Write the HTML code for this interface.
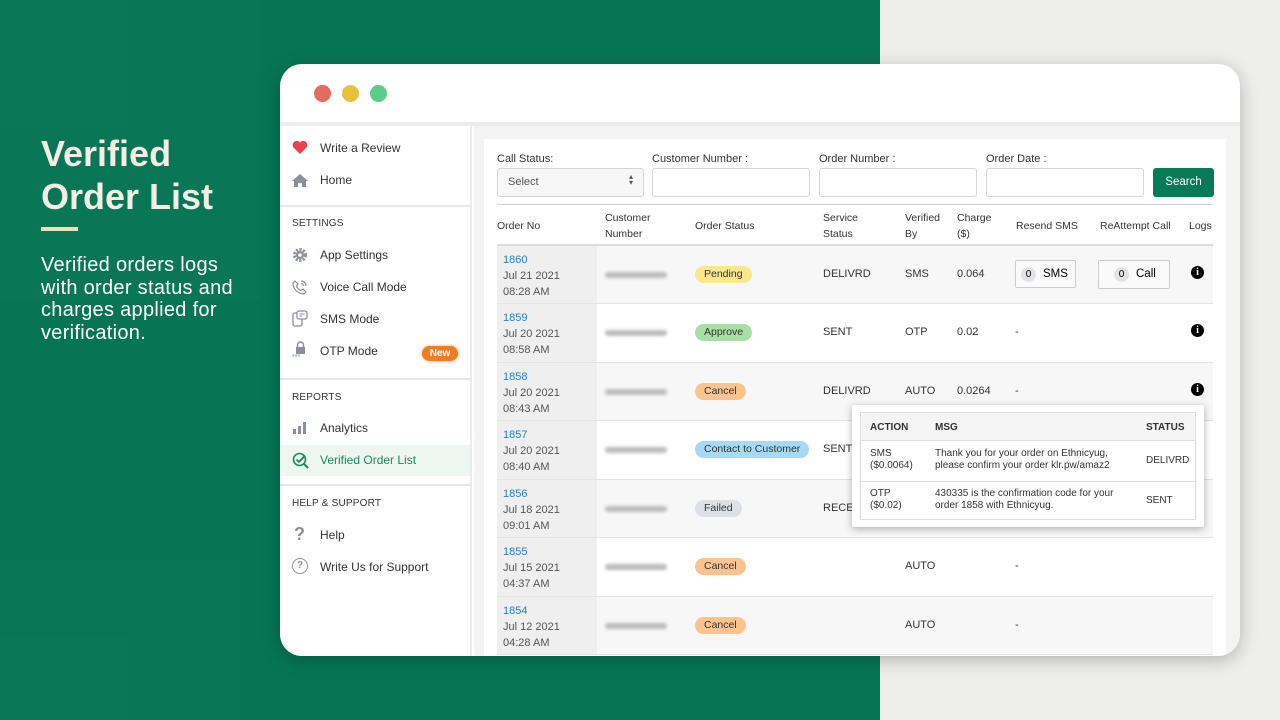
<!DOCTYPE html>
<html><head><meta charset="utf-8"><style>
*{margin:0;padding:0;box-sizing:border-box}
body{width:1280px;height:720px;overflow:hidden;position:relative;font-family:"Liberation Sans",sans-serif;background:#eeeeec}
.green{position:absolute;left:0;top:0;width:880px;height:720px;background:#077553}
.g2{position:absolute;background:rgba(255,255,255,0.012)}
.h1{position:absolute;left:41px;top:132px;color:#f4efe6;font-size:36px;font-weight:bold;line-height:43px}
.bar{position:absolute;left:41px;top:227px;width:37px;height:4px;background:#f2dcc0}
.p{position:absolute;left:41px;top:254px;color:#fff;font-size:20px;line-height:22.5px;letter-spacing:.3px}
.card{position:absolute;left:280px;top:64px;width:960px;height:592px;background:#fff;border-radius:22px;overflow:hidden;box-shadow:0 4px 18px rgba(0,0,0,.25)}
.dot{position:absolute;top:21px;width:17px;height:17px;border-radius:50%}
.sep{position:absolute;left:0;top:58px;width:960px;height:4px;background:#ececec}
.side{position:absolute;left:0;top:62px;width:192px;height:530px;background:#fff;border-right:2px solid #ececec}
.main{position:absolute;left:194px;top:62px;width:766px;height:530px;background:#f3f3f4}
.si{position:absolute;left:40px;font-size:12px;color:#333}
.sh{position:absolute;left:12px;font-size:10px;color:#333;letter-spacing:.2px}
.hr{position:absolute;left:0;width:192px;height:2px;background:#e8e8e8}
.ic{position:absolute;left:12px}
.panel{position:absolute;left:204px;top:75px;width:742px;height:520px;background:#fff}
.lbl{position:absolute;top:14px;font-size:11px;color:#333}
.inp{position:absolute;top:29px;height:29px;border:1px solid #d5d5d5;border-radius:3px;background:#fff}
.btn{position:absolute;left:669px;top:29px;width:61px;height:29px;background:#087a55;color:#fff;font-size:11.5px;text-align:center;line-height:29px;border-radius:3px}
.t{position:absolute;font-size:11px;color:#333}
.th{position:absolute;font-size:10.5px;color:#333;line-height:16px}
.row{position:absolute;left:13px;width:716px;border-bottom:1px solid #e3e3e3}
.oc{position:absolute;left:0;top:0;width:100px;height:100%;background:#efefef}
.on{position:absolute;left:6px;top:6px;font-size:11px;line-height:16px;color:#555}
.on b{font-weight:normal;color:#2a7fc9}
.blur{position:absolute;left:108px;width:62px;height:6px;background:#bbb;border-radius:3px;filter:blur(1.5px)}
.badge{position:absolute;left:198px;height:17px;border-radius:9px;font-size:10.5px;line-height:17px;padding:0 9px;color:#333}
.info{position:absolute;left:694px;width:13px;height:13px;border-radius:50%;background:#000;color:#fff;font-size:10px;font-weight:bold;text-align:center;line-height:13px;font-family:"Liberation Serif",serif}
.pop{position:absolute;left:852px;top:405px;width:352px;height:122px;background:#fff;box-shadow:0 2px 8px rgba(0,0,0,.3);border-radius:2px}
.pt{position:absolute;left:8px;top:7px;width:336px;height:108px;border:1px solid #ddd}
.pt div{position:absolute;font-size:10px;color:#333;line-height:12px}
</style></head><body>
<div class="green">
<div class="g2" style="left:0;top:0;width:260px;height:300px"></div>
<div class="g2" style="left:0;top:560px;width:240px;height:160px"></div>
</div>
<div class="h1">Verified<br>Order List</div>
<div class="bar"></div>
<div class="p">Verified orders logs<br>with order status and<br>charges applied for<br>verification.</div>

<div class="card">
<div class="dot" style="left:34px;background:#e06b5e"></div>
<div class="dot" style="left:62px;background:#e6c23c"></div>
<div class="dot" style="left:90px;background:#5ecb8b"></div>
<div class="sep"></div>
<div class="side">
<svg class="ic" style="top:14px" width="16" height="14" viewBox="0 0 16 14"><path d="M8 14L1.5 7.5A4 4 0 0 1 8 2.5a4 4 0 0 1 6.5 5z" fill="#e8404e"/></svg>
<div class="si" style="top:15px">Write a Review</div>
<svg class="ic" style="top:47px" width="16" height="14" viewBox="0 0 16 14"><path d="M8 1L0 8h2v6h4V10h4v4h4V8h2z" fill="#8a9099"/></svg>
<div class="si" style="top:47px">Home</div>
<div class="hr" style="top:79px"></div>
<div class="sh" style="top:92px">SETTINGS</div>
<svg class="ic" style="top:121px" width="16" height="16" viewBox="0 0 16 16"><circle cx="8" cy="8" r="5.5" fill="none" stroke="#8a9099" stroke-width="3" stroke-dasharray="2.2 1.4"/><circle cx="8" cy="8" r="4" fill="#8a9099"/><circle cx="8" cy="8" r="1.8" fill="#fff"/></svg>
<div class="si" style="top:122px">App Settings</div>
<svg class="ic" style="top:153px" width="16" height="16" viewBox="0 0 16 16"><path d="M3 2l3 3-1.5 2a8 8 0 0 0 4.5 4.5L11 10l3 3-2 2C6 15 1 10 1 4z" fill="none" stroke="#8a9099" stroke-width="1.2"/><path d="M9 2a5 5 0 0 1 5 5M9 4.5a2.5 2.5 0 0 1 2.5 2.5" fill="none" stroke="#8a9099" stroke-width="1.2"/></svg>
<div class="si" style="top:154px">Voice Call Mode</div>
<svg class="ic" style="top:184px" width="16" height="17" viewBox="0 0 16 17"><rect x="1" y="3" width="9" height="13" rx="2" fill="none" stroke="#8a9099" stroke-width="1.3"/><rect x="5" y="1" width="10" height="8" rx="2" fill="#fff" stroke="#8a9099" stroke-width="1.3"/><path d="M7.5 4h5M7.5 6h3" stroke="#8a9099"/></svg>
<div class="si" style="top:186px">SMS Mode</div>
<svg class="ic" style="top:215px" width="17" height="18" viewBox="0 0 17 18"><rect x="4" y="6" width="9" height="7" fill="#8a9099"/><path d="M5.5 6V4a3 3 0 0 1 6 0v2" fill="none" stroke="#8a9099" stroke-width="1.5"/><text x="0" y="18" font-size="7" fill="#8a9099" font-family="Liberation Sans">***</text></svg>
<div class="si" style="top:218px">OTP Mode</div>
<div style="position:absolute;left:142px;top:220px;width:36px;height:15px;border-radius:8px;background:#ef7d22;color:#fff;font-size:10px;font-weight:bold;text-align:center;line-height:15px;box-shadow:0 0 3px #f3a060">New</div>
<div class="hr" style="top:252px"></div>
<div class="sh" style="top:266px">REPORTS</div>
<svg class="ic" style="top:295px" width="16" height="14" viewBox="0 0 16 14"><rect x="1" y="8" width="3" height="5" fill="#8a9099"/><rect x="6" y="5" width="3" height="8" fill="#8a9099"/><rect x="11" y="1" width="3" height="12" fill="#8a9099"/></svg>
<div class="si" style="top:295px">Analytics</div>
<div style="position:absolute;left:0;top:319px;width:190px;height:31px;background:#eef6f2"></div>
<svg class="ic" style="top:326px" width="18" height="18" viewBox="0 0 18 18"><circle cx="7.5" cy="7.5" r="6" fill="none" stroke="#178a5c" stroke-width="1.6"/><path d="M4.5 7.5l2.5 2.5 6-6.5" fill="none" stroke="#178a5c" stroke-width="1.8"/><path d="M12 12l4 4" stroke="#178a5c" stroke-width="2"/></svg>
<div class="si" style="top:327px;color:#178a5c">Verified Order List</div>
<div class="hr" style="top:358px"></div>
<div class="sh" style="top:372px">HELP &amp; SUPPORT</div>
<div class="ic" style="top:398px;left:14px;font-size:18px;font-weight:bold;color:#8a9099">?</div>
<div class="si" style="top:402px">Help</div>
<div class="ic" style="top:432px;width:16px;height:16px;border:1.5px solid #8a9099;border-radius:50%;font-size:10px;text-align:center;line-height:13px;color:#8a9099;font-weight:bold">?</div>
<div class="si" style="top:434px">Write Us for Support</div>
</div>
<div class="main"></div>
<div class="panel">
<div class="lbl" style="left:13px">Call Status:</div>
<div class="lbl" style="left:168px">Customer Number :</div>
<div class="lbl" style="left:335px">Order Number :</div>
<div class="lbl" style="left:502px">Order Date :</div>
<div class="inp" style="left:13px;width:147px;background:#f7f7f8"><span style="position:absolute;left:10px;top:7px;font-size:11px;color:#555">Select</span><span style="position:absolute;right:10px;top:5px;font-size:8px;color:#555;line-height:6px">▴<br>▾</span></div>
<div class="inp" style="left:168px;width:158px"></div>
<div class="inp" style="left:335px;width:158px"></div>
<div class="inp" style="left:502px;width:158px"></div>
<div class="btn">Search</div>
<div style="position:absolute;left:13px;top:65px;width:716px;height:1px;background:#ccc"></div>
<div class="th" style="left:13px;top:79px">Order No</div>
<div class="th" style="left:121px;top:71px">Customer<br>Number</div>
<div class="th" style="left:211px;top:79px">Order Status</div>
<div class="th" style="left:339px;top:71px">Service<br>Status</div>
<div class="th" style="left:421px;top:71px">Verified<br>By</div>
<div class="th" style="left:473px;top:71px">Charge<br>($)</div>
<div class="th" style="left:532px;top:79px">Resend SMS</div>
<div class="th" style="left:616px;top:79px">ReAttempt Call</div>
<div class="th" style="left:705px;top:79px">Logs</div>
<div style="position:absolute;left:13px;top:105px;width:716px;height:2px;background:#ddd"></div>

<div class="row" style="top:107px;height:58px;background:#f7f7f7"><div class="oc"></div><div class="on"><b>1860</b><br>Jul 21 2021<br>08:28 AM</div><div class="blur" style="top:26px"></div><div class="badge" style="top:20px;background:#fbe790">Pending</div><div class="t" style="left:326px;top:22px">DELIVRD</div><div class="t" style="left:408px;top:22px">SMS</div><div class="t" style="left:460px;top:22px">0.064</div>
<div style="position:absolute;left:518px;top:14px;width:61px;height:28px;border:1px solid #ccc;border-radius:2px;background:#fafafa"><span style="position:absolute;left:5px;top:6px;width:15px;height:15px;border-radius:50%;background:#e3e3e5;font-size:10px;text-align:center;line-height:15px">0</span><span style="position:absolute;left:27px;top:7px;font-size:11.5px">SMS</span></div>
<div style="position:absolute;left:601px;top:14px;width:72px;height:29px;border:1px solid #ccc;border-radius:2px;background:#fafafa"><span style="position:absolute;left:15px;top:6px;width:15px;height:15px;border-radius:50%;background:#e3e3e5;font-size:10px;text-align:center;line-height:15px">0</span><span style="position:absolute;left:37px;top:7px;font-size:11.5px">Call</span></div>
<div class="info" style="top:20px">i</div></div>

<div class="row" style="top:165px;height:59px;background:#fff"><div class="oc"></div><div class="on"><b>1859</b><br>Jul 20 2021<br>08:58 AM</div><div class="blur" style="top:26px"></div><div class="badge" style="top:20px;background:#a9dfa5">Approve</div><div class="t" style="left:326px;top:22px">SENT</div><div class="t" style="left:408px;top:22px">OTP</div><div class="t" style="left:460px;top:22px">0.02</div><div class="t" style="left:518px;top:22px">-</div><div class="info" style="top:20px">i</div></div>

<div class="row" style="top:224px;height:58px;background:#f7f7f7"><div class="oc"></div><div class="on"><b>1858</b><br>Jul 20 2021<br>08:43 AM</div><div class="blur" style="top:26px"></div><div class="badge" style="top:20px;background:#fbc48e">Cancel</div><div class="t" style="left:326px;top:22px">DELIVRD</div><div class="t" style="left:408px;top:22px">AUTO</div><div class="t" style="left:460px;top:22px">0.0264</div><div class="t" style="left:518px;top:22px">-</div><div class="info" style="top:20px">i</div></div>

<div class="row" style="top:282px;height:59px;background:#fff"><div class="oc"></div><div class="on"><b>1857</b><br>Jul 20 2021<br>08:40 AM</div><div class="blur" style="top:26px"></div><div class="badge" style="top:20px;background:#a8d9f4">Contact to Customer</div><div class="t" style="left:326px;top:22px">SENT</div></div>

<div class="row" style="top:341px;height:58px;background:#f7f7f7"><div class="oc"></div><div class="on"><b>1856</b><br>Jul 18 2021<br>09:01 AM</div><div class="blur" style="top:26px"></div><div class="badge" style="top:20px;background:#dde1e6">Failed</div><div class="t" style="left:326px;top:22px">RECEI</div></div>

<div class="row" style="top:399px;height:59px;background:#fff"><div class="oc"></div><div class="on"><b>1855</b><br>Jul 15 2021<br>04:37 AM</div><div class="blur" style="top:26px"></div><div class="badge" style="top:20px;background:#fbc48e">Cancel</div><div class="t" style="left:408px;top:22px">AUTO</div><div class="t" style="left:518px;top:22px">-</div></div>

<div class="row" style="top:458px;height:58px;background:#f7f7f7"><div class="oc"></div><div class="on"><b>1854</b><br>Jul 12 2021<br>04:28 AM</div><div class="blur" style="top:26px"></div><div class="badge" style="top:20px;background:#fbc48e">Cancel</div><div class="t" style="left:408px;top:22px">AUTO</div><div class="t" style="left:518px;top:22px">-</div></div>
</div>
</div>

<div class="pop"><div class="pt">
<div style="left:0;top:0;width:334px;height:28px;background:#f5f5f5;border-bottom:1px solid #ddd"></div>
<div style="left:9px;top:9px;font-weight:bold">ACTION</div><div style="left:74px;top:9px;font-weight:bold">MSG</div><div style="left:285px;top:9px;font-weight:bold">STATUS</div>
<div style="left:9px;top:35px">SMS<br>($0.0064)</div><div style="left:74px;top:35px">Thank you for your order on Ethnicyug,<br>please confirm your order klr.pw/amaz2</div><div style="left:285px;top:42px">DELIVRD</div>
<div style="left:0;top:68px;width:334px;height:1px;background:#ddd"></div>
<div style="left:9px;top:75px">OTP<br>($0.02)</div><div style="left:74px;top:75px">430335 is the confirmation code for your<br>order 1858 with Ethnicyug.</div><div style="left:285px;top:82px">SENT</div>
</div></div>
</body></html>
